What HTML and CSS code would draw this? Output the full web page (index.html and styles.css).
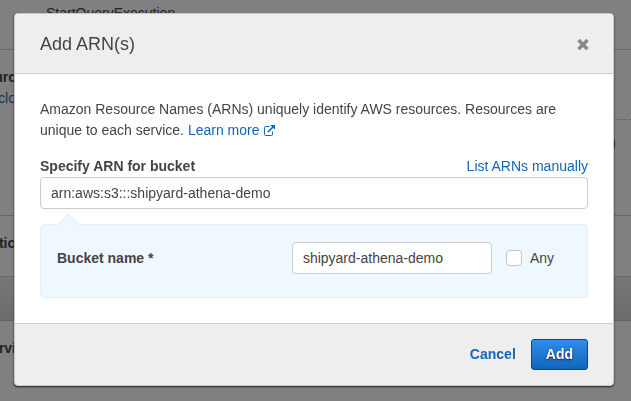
FILE: index.html
```html
<!DOCTYPE html>
<html lang="en">
<head>
<meta charset="utf-8">
<title>Add ARN(s)</title>
<link rel="stylesheet" href="styles.css">
</head>
<body>
<div class="page">
  <section class="row row-actions"><span>StartQueryExecution</span></section>
  <section class="row row-resources">
    <div class="side"><b>urc</b><a href="#">clo</a></div>
    <div class="statement"><div class="statement-line"></div><span>)</span></div>
  </section>
  <section class="row row-conditions"><div class="side"><b>tio</b></div></section>
  <div class="bar"></div>
  <section class="row row-service"><div class="side"><b>rvi</b></div></section>
</div>
<div class="overlay">
  <form class="dialog" role="dialog" aria-labelledby="title">
    <header class="dialog-header">
      <h1 id="title">Add ARN(s)</h1>
      <button class="close" type="button" aria-label="Close">
        <svg width="12" height="12" viewBox="0 0 12 12"><path d="M2.7 2.3 9.3 8.9M9.3 2.3 2.7 8.9" fill="none" stroke="#888" stroke-width="3.5" stroke-linecap="square"/></svg>
      </button>
    </header>
    <div class="dialog-body">
      <p>Amazon Resource Names (ARNs) uniquely identify AWS resources. Resources are unique to each service. <a href="#">Learn more <svg class="external" width="12" height="11" viewBox="0 0 12 11"><path d="M6.5 1.5H2.5Q1.5 1.5 1.5 2.5V9.5Q1.5 10.5 2.5 10.5H8.5Q9.5 10.5 9.5 9.5V6.5" fill="none" stroke="currentColor"/><path d="M5 7 10 2" stroke="currentColor" stroke-width="1.7"/><path d="M7.2 0H12V4.8Z" fill="currentColor"/></svg></a></p>
      <div class="field">
        <div class="field-head">
          <label class="strong" for="arn">Specify ARN for bucket</label>
          <a href="#">List ARNs manually</a>
        </div>
        <input class="text" id="arn" type="text" value="arn:aws:s3:::shipyard-athena-demo">
      </div>
      <div class="panel">
        <label class="strong" for="bucket">Bucket name *</label>
        <input class="text bucket" id="bucket" type="text" value="shipyard-athena-demo">
        <label class="any"><input type="checkbox">Any</label>
      </div>
    </div>
    <footer class="dialog-footer">
      <button class="cancel" type="button">Cancel</button>
      <button class="add" type="button">Add</button>
    </footer>
  </form>
</div>
</body>
</html>
```
FILE: styles.css
```css
* { box-sizing: border-box; }
body {
  margin: 0;
  background: #808080;
  color: #444;
  font: 14px/21px "Liberation Sans", Arial, sans-serif;
  overflow: hidden;
}
button, input { font: inherit; color: inherit; }
a { text-decoration: none; }
a, .cancel { color: #1166bb; }

.page { color: #222; }
.page a { color: #08335d; }
.row { display: flex; border-bottom: 1px solid #666; }
.row-actions { padding: 3px 46px 25px; }
.row-resources { min-height: 166px; padding-top: 17px; }
.row-conditions { padding: 17px 0 22px; }
.row-service { border: 0; padding-top: 17px; }
.side {
  width: 16px;
  display: flex;
  flex-direction: column;
  align-items: flex-end;
}
.statement { flex: 1; text-align: right; padding: 52px 15px 0 0; }
.statement-line { border-top: 1px dotted #5c5c5c; margin: 0 -15px 13px 0; }
.bar {
  height: 44px;
  border-bottom: 1px solid #626262;
  background: linear-gradient(#777, #6c6c6c);
}

.overlay {
  position: fixed;
  inset: 0;
  padding: 13px 17px 15px 14px;
  display: flex;
  align-items: flex-start;
}
.dialog {
  flex: 1;
  border: 1px solid #c8c8c8;
  border-radius: 4px;
  background: #fff;
  box-shadow: 0 1px 2px #222;
  overflow: hidden;
}
.dialog-header {
  display: flex;
  align-items: center;
  justify-content: space-between;
  padding: 20px 24px 18px 25px;
  border-bottom: 1px solid #ccc;
  background: #eee;
}
h1 { margin: 0; font-size: 18px; line-height: 21px; font-weight: 400; }
.close { display: flex; padding: 0; border: 0; background: none; }
.dialog-body { display: grid; gap: 15px; padding: 25px; }
p { margin: 0; }
.external { vertical-align: -1px; }
.field-head { display: flex; justify-content: space-between; }
.strong { font-weight: 700; }
.text {
  display: block;
  width: 100%;
  height: 32px;
  padding: 0 10px;
  border: 1px solid #ccc;
  border-radius: 4px;
  background: #fff;
}
.panel {
  position: relative;
  display: flex;
  align-items: center;
  padding: 17px 33px 23px 16px;
  border: 1px solid #e1f0fc;
  border-radius: 4px;
  background: #f0f8ff;
}
.panel::before {
  content: "";
  position: absolute;
  top: -8px;
  left: 19px;
  width: 16px;
  height: 16px;
  border: 1px solid #e1f0fc;
  border-width: 1px 0 0 1px;
  background: #f0f8ff;
  transform: rotate(45deg);
}
.bucket { width: 200px; margin-left: auto; }
.any { display: flex; align-items: center; gap: 8px; margin-left: 14px; }
.any input {
  appearance: none;
  width: 16px;
  height: 16px;
  margin: 0;
  border: 1px solid #c4c4c4;
  border-radius: 4px;
  background: #fff;
}
.dialog-footer {
  display: flex;
  justify-content: flex-end;
  align-items: center;
  gap: 15px;
  padding: 15px 25px;
  border-top: 1px solid #ccc;
  background: #eee;
}
.cancel { padding: 0; border: 0; background: none; font-weight: 700; }
.add {
  padding: 4px 14px;
  border: 1px solid #12457c;
  border-radius: 3px;
  background: linear-gradient(#2e8de9, #1166bb);
  color: #fff;
  font-weight: 700;
  text-shadow: 0 1px 2px #222;
}
```
